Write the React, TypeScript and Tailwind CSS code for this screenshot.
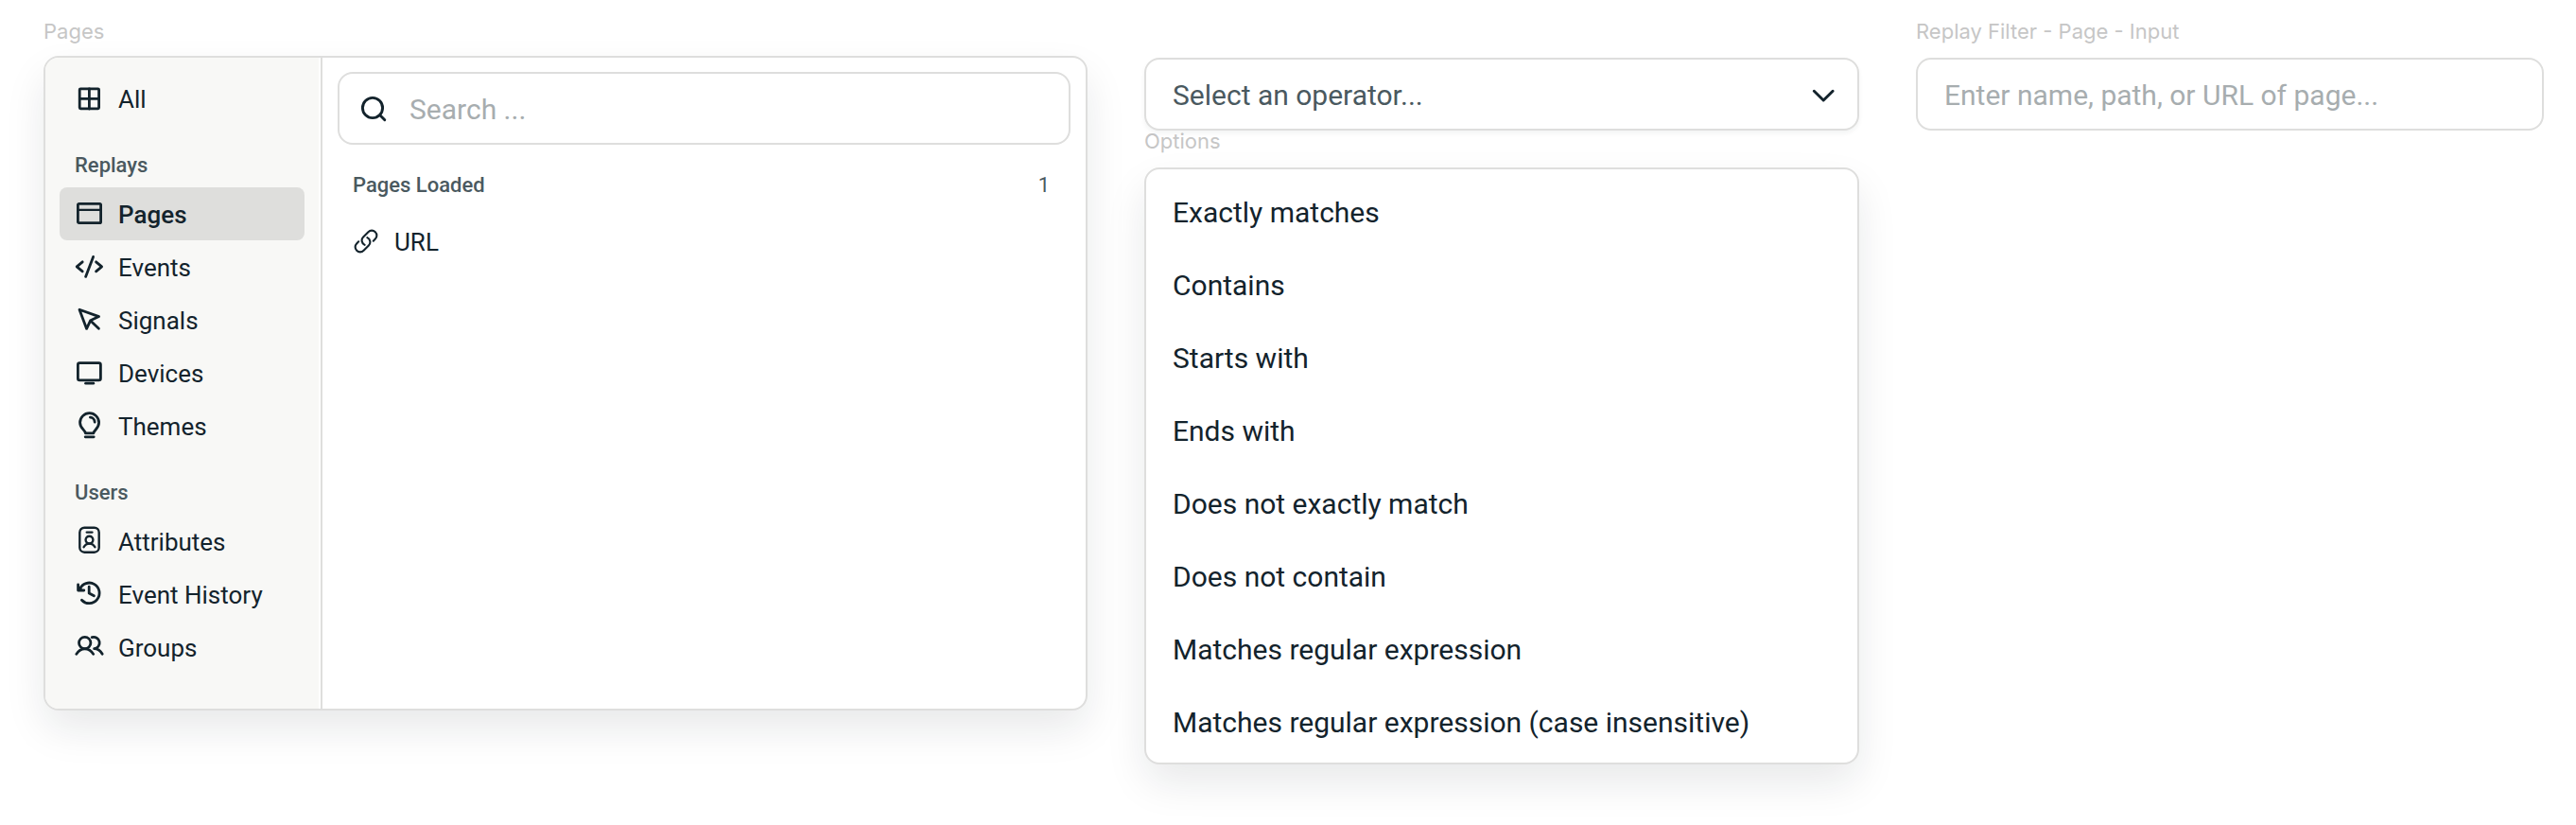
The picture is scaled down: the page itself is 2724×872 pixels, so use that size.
import { useState } from "react";
import type { ReactNode } from "react";

type NavItem = { id: string; label: string; icon: ReactNode };
type NavGroup = { title?: string; items: NavItem[] };

const Icon = ({ children }: { children: ReactNode }) => (
  <svg
    viewBox="0 0 32 32"
    className="size-8 shrink-0"
    fill="none"
    stroke="currentColor"
    strokeWidth="2.8"
    strokeLinecap="round"
    strokeLinejoin="round"
    aria-hidden="true"
  >
    {children}
  </svg>
);

const groups: NavGroup[] = [
  {
    items: [
      {
        id: "all",
        label: "All",
        icon: (
          <Icon>
            <rect x="5.2" y="5.8" width="20.4" height="21" rx="1" />
            <path d="M15.4 6v21M5.4 16.3h20" />
          </Icon>
        ),
      },
    ],
  },
  {
    title: "Replays",
    items: [
      {
        id: "pages",
        label: "Pages",
        icon: (
          <Icon>
            <rect x="3.4" y="5.4" width="24.2" height="20.2" rx="1.2" />
            <path d="M4 11.8h23" strokeWidth="2.2" />
          </Icon>
        ),
      },
      {
        id: "events",
        label: "Events",
        icon: (
          <Icon>
            <path d="M8.2 10.8 2.2 15.8l6 5M22.6 10.8l6 5-6 5M19.6 5.4 11.6 26.4" />
          </Icon>
        ),
      },
      {
        id: "signals",
        label: "Signals",
        icon: (
          <Icon>
            <path d="M5 5.2 25.6 12.6 16.6 16.8 12.6 25.4ZM17 17.2l8.4 8" />
          </Icon>
        ),
      },
      {
        id: "devices",
        label: "Devices",
        icon: (
          <Icon>
            <rect x="3.4" y="5.6" width="24" height="18.2" rx="1.8" />
            <path d="M11.6 27.2h8.2" />
          </Icon>
        ),
      },
      {
        id: "themes",
        label: "Themes",
        icon: (
          <Icon>
            <path d="M11.4 23.8C11 20.6 5.6 18.6 5.6 12.7a10 10 0 0 1 20 0c0 5.9-5.2 7.9-5.7 11.1Z" />
            <path d="M16.4 7.2a5.2 5.2 0 0 1 4.8 5M11.2 27.8h9" />
          </Icon>
        ),
      },
    ],
  },
  {
    title: "Users",
    items: [
      {
        id: "attributes",
        label: "Attributes",
        icon: (
          <Icon>
            <g strokeWidth="2.4">
              <rect x="5.3" y="1.7" width="20.4" height="26" rx="5" />
              <path d="M12.8 6.6h5.6" />
              <circle cx="15.5" cy="14.6" r="3.9" />
              <path d="M9.6 22.2c1.2-2.2 3.4-3.6 5.9-3.6s4.7 1.4 5.9 3.6" />
            </g>
          </Icon>
        ),
      },
      {
        id: "history",
        label: "Event History",
        icon: (
          <Icon>
            <path d="M5.4 10.6A10.8 10.8 0 1 1 7.4 22.2" />
            <path d="M3.6 5.8v6.2h6.2M3.8 8.4l3.4 3.4" />
            <path d="M15.2 8.2v6.8l5.2 2.8" />
          </Icon>
        ),
      },
      {
        id: "groups",
        label: "Groups",
        icon: (
          <Icon>
            <circle cx="10.7" cy="11.5" r="6.2" />
            <path d="M1.8 23.4c2-3.4 5.2-5.6 8.9-5.6s7 2.200 9 5.600" />
            <path d="M18.2 5.6a6.2 6.2 0 1 1 2.4 12.1c3.8 0 6.6 2.2 8.6 5.600" />
          </Icon>
        ),
      },
    ],
  },
];

const operators = [
  "Exactly matches",
  "Contains",
  "Starts with",
  "Ends with",
  "Does not exactly match",
  "Does not contain",
  "Matches regular expression",
  "Matches regular expression (case insensitive)",
];

function PagesPanel() {
  const [active, setActive] = useState("pages");

  return (
    <div className="flex overflow-hidden rounded-2xl border-2 border-[#dededd] bg-white shadow-[0_20px_44px_-2px_rgba(16,34,43,0.1)]">
      <nav className="w-[289px] shrink-0 bg-[#f8f8f6] px-[15px] pt-[15px] pb-[37px]">
        {groups.map((group) => (
          <div key={group.items[0].id}>
            {group.title && (
              <h2 className="px-4 pt-[29px] pb-[9px] text-[22px] leading-7 font-medium text-[#4a595f]">
                {group.title}
              </h2>
            )}
            {group.items.map((item) => (
              <button
                key={item.id}
                type="button"
                onClick={() => setActive(item.id)}
                className={
                  "flex h-14 w-full items-center gap-3.5 rounded-lg px-4 text-left text-[26px] " +
                  (item.id === active ? "bg-[#dededc] font-medium" : "")
                }
              >
                {item.icon}
                <span className="pt-0.5">{item.label}</span>
              </button>
            ))}
          </div>
        ))}
      </nav>

      <div className="ml-0.5 min-w-0 flex-1 border-l-2 border-[#dededd] px-4 pt-[15px]">
        <label className="flex h-[77px] items-center gap-[22px] rounded-2xl border-2 border-[#dededd] px-5">
          <Icon>
            <g strokeWidth="2.9">
              <circle cx="15" cy="15" r="10.6" />
              <path d="m22.8 22.8 5 5" />
            </g>
          </Icon>
          <input
            type="search"
            aria-label="Search"
            placeholder="Search ..."
            className="w-full min-w-0 bg-transparent pt-0.5 text-[30px] outline-none placeholder:text-[#a7adaf]"
          />
        </label>
        <div className="flex justify-between pt-[29px] pr-[22px] pb-[17px] pl-4 text-[22px] leading-7 text-[#4a595f]">
          <h3 className="font-medium">Pages Loaded</h3>
          <span>1</span>
        </div>
        <a href="#url" className="flex h-14 items-center gap-4 px-4 text-[26px]">
          <svg
            viewBox="0 0 24 24"
            className="size-7 shrink-0"
            fill="none"
            stroke="currentColor"
            strokeWidth="1.8"
            strokeLinecap="round"
            strokeLinejoin="round"
            aria-hidden="true"
          >
            <path d="M13.19 8.688a4.5 4.5 0 0 1 1.242 7.244l-4.5 4.5a4.5 4.5 0 0 1-6.364-6.364l1.757-1.757m13.35-.622 1.757-1.757a4.5 4.5 0 0 0-6.364-6.364l-4.5 4.5a4.5 4.5 0 0 0 1.242 7.244" />
          </svg>
          <span className="pt-0.5">URL</span>
        </a>
      </div>
    </div>
  );
}

function OperatorSelect() {
  const [value, setValue] = useState("");

  return (
    <>
      <div className="relative">
        <select
          aria-label="Operator"
          value={value}
          onChange={(e) => setValue(e.target.value)}
          className="h-[77px] w-full appearance-none rounded-2xl border-2 border-[#dededd] bg-white px-7 pt-0.5 text-[30px] text-[#4a595f] shadow-[0_3px_5px_rgba(16,34,43,0.05)] outline-none"
        >
          <option value="">Select an operator...</option>
          {operators.map((o) => (
            <option key={o}>{o}</option>
          ))}
        </select>
        <svg
          viewBox="0 0 32 32"
          className="pointer-events-none absolute inset-y-0 right-[22px] my-auto size-8"
          fill="none"
          stroke="currentColor"
          strokeWidth="3"
          strokeLinecap="round"
          strokeLinejoin="round"
          aria-hidden="true"
        >
          <path d="m6.3 12.3 9.9 9.7 9.9-9.7" />
        </svg>
      </div>
      <h2 className="mb-[17px] font-[Inter,sans-serif] text-[22px] leading-[22px] text-[#c6c6c6]">Options</h2>
      <ul
        role="listbox"
        aria-label="Options"
        className="rounded-2xl border-2 border-[#dededd] bg-white pt-1.5 pb-[5px] shadow-[0_20px_44px_-2px_rgba(16,34,43,0.1)]"
      >
        {operators.map((o) => (
          <li
            key={o}
            role="option"
            aria-selected={o === value}
            onClick={() => setValue(o)}
            className="flex h-[77px] cursor-pointer items-center px-7 pt-0.5 text-[30px]"
          >
            {o}
          </li>
        ))}
      </ul>
    </>
  );
}

export default function App() {
  return (
    <main className="grid min-h-screen grid-cols-[1104fr_756fr_664fr] items-start gap-[60px] bg-white pt-[22px] pr-[34px] pb-10 pl-[46px] font-[Roboto,sans-serif] text-[#13232c]">
      <section>
        <h1 className="mb-[15px] font-[Inter,sans-serif] text-[22px] leading-[22px] text-[#c6c6c6]">Pages</h1>
        <PagesPanel />
      </section>
      <section className="pt-[39px]">
        <OperatorSelect />
      </section>
      <section>
        <label
          htmlFor="page-filter"
          className="mb-[17px] block font-[Inter,sans-serif] text-[22px] leading-[22px] text-[#c6c6c6]"
        >
          Replay Filter - Page - Input
        </label>
        <input
          id="page-filter"
          type="text"
          placeholder="Enter name, path, or URL of page..."
          className="h-[77px] w-full rounded-2xl border-2 border-[#dededd] px-7 pt-0.5 text-[30px] outline-none placeholder:text-[#a7adaf]"
        />
      </section>
    </main>
  );
}
